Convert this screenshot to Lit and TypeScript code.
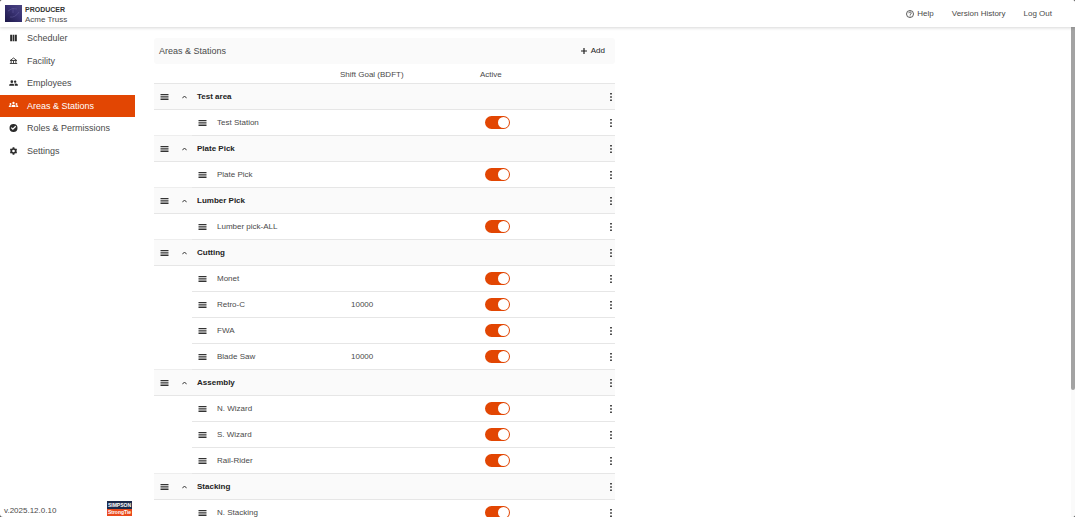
import { LitElement, html, css, svg, nothing } from "lit";
import { customElement, state } from "lit/decorators.js";
import { classMap } from "lit/directives/class-map.js";

interface Station {
  name: string;
  goal?: number;
  active: boolean;
}

interface Area {
  name: string;
  stations: Station[];
}

const on = (name: string, goal?: number): Station => ({ name, goal, active: true });

const AREAS: Area[] = [
  { name: "Test area", stations: [on("Test Station")] },
  { name: "Plate Pick", stations: [on("Plate Pick")] },
  { name: "Lumber Pick", stations: [on("Lumber pick-ALL")] },
  { name: "Cutting", stations: [on("Monet"), on("Retro-C", 10000), on("FWA"), on("Blade Saw", 10000)] },
  { name: "Assembly", stations: [on("N. Wizard"), on("S. Wizard"), on("Rail-Rider")] },
  { name: "Stacking", stations: [on("N. Stacking")] },
];

const NAV_ICONS: Record<string, unknown> = {
  Scheduler: svg`<path d="M2 2h5.500v20H2zM9.200 2h5.500v20H9.200zM16.400 2H22v20h-5.600z"/>`,
  Facility: svg`<path d="M12 3 2 10.500h20zM5 11v8M12 11v8M19 11v8M1 19.500h22" fill="none" stroke="currentColor" stroke-width="2.600"/>`,
  Employees: svg`<circle cx="7" cy="8" r="4"/><circle cx="17" cy="8" r="3.500"/><path d="M-1 20v-2c0-3 4-4 8-4s7 1 7 4v2zM16 20v-3c0-1.500-.6-2.600-1.500-3.500 4-.8 10.500.3 10.500 3.500v3z"/>`,
  "Areas & Stations": svg`<circle cx="12" cy="3" r="3.500"/><circle cx="3" cy="6" r="2.800"/><circle cx="21" cy="6" r="2.800"/><path d="M6 15v-3c0-2.500 3-3.500 6-3.500s6 1 6 3.500v3zM-2 15v-2c0-2.500 3-3.500 6.500-3-.5 1-.5 2-.5 5zM26 15v-2c0-2.500-3-3.500-6.500-3 .5 1 .5 2 .5 5z"/>`,
  "Roles & Permissions": svg`<path fill-rule="evenodd" d="M12 0a12 12 0 1 0 0 24 12 12 0 0 0 0-24zm-2 18-6-6 2.500-2.500L10 13l7.500-7.500L20 8z"/>`,
  Settings: svg`<path fill-rule="evenodd" d="m9.500 1h5l.7 3.300 2 1.200 3.200-1 2.500 4.300-2.500 2.200v2l2.500 2.200-2.500 4.300-3.200-1-2 1.200-.7 3.300h-5l-.7-3.300-2-1.200-3.200 1-2.500-4.300L3.600 13v-2L1.100 8.800l2.500-4.300 3.200 1 2-1.200zM12 8a4 4 0 1 0 0 8 4 4 0 0 0 0-8z"/>`,
};

const CURRENT = "Areas & Stations";

const handleIcon = html`<svg class="handle" viewBox="0 0 9 6" aria-hidden="true">
  <path d="M.5 0h8v1.300h-8zM.5 2.300h8v1.300h-8zM.5 4.600h8v1.300h-8z" />
</svg>`;

const moreIcon = html`<svg class="more-icon" viewBox="0 0 2 8" aria-hidden="true">
  <path d="M.2 0h1.600v1.600H.2zM.2 3.200h1.600v1.600H.2zM.2 6.400h1.600V8H.2z" />
</svg>`;

@customElement("app-root")
export class AppRoot extends LitElement {
  @state() private collapsed = new Set<string>();

  static styles = css`
    :host {
      display: block;
      height: 100vh;
      overflow: hidden;
      background: #555;
      font-family: "Liberation Sans", Arial, sans-serif;
      font-size: 8px;
      line-height: 12px;
      color: #4a4a4a;
    }
    * {
      box-sizing: border-box;
    }
    button {
      font: inherit;
      color: inherit;
      background: none;
      border: 0;
      padding: 0;
      cursor: pointer;
    }
    a {
      color: inherit;
      text-decoration: none;
    }
    svg {
      display: block;
      fill: currentColor;
    }
    .app {
      display: flex;
      flex-direction: column;
      height: 100%;
      background: #fff;
      border-radius: 3px;
      overflow: hidden;
    }
    .topbar {
      flex: none;
      display: flex;
      align-items: center;
      height: 27px;
      padding: 0 23px 0 5px;
      background: #fff;
      box-shadow: 0 1px 3px rgba(0, 0, 0, 0.16);
      z-index: 1;
    }
    .mark {
      width: 17px;
      height: 17px;
      margin-right: 3px;
    }
    .brand {
      line-height: 10px;
      padding-top: 3px;
    }
    .product {
      display: block;
      font-weight: bold;
      font-size: 7px;
      color: #333;
    }
    .links {
      display: flex;
      gap: 18px;
      margin-left: auto;
    }
    .links a {
      display: flex;
      align-items: center;
      gap: 3px;
    }
    .help-icon {
      width: 8px;
      height: 8px;
      fill: none;
      stroke: currentColor;
    }
    .body {
      flex: 1;
      min-height: 0;
      display: flex;
    }
    .sidebar {
      flex: none;
      width: 135px;
      display: flex;
      flex-direction: column;
      justify-content: space-between;
    }
    .nav {
      display: grid;
      grid-auto-rows: 1fr;
      height: 135px;
      font-size: 9px;
    }
    .nav a {
      display: flex;
      align-items: center;
      gap: 9px;
      padding-left: 9px;
    }
    .nav a.current {
      background: #e24603;
      color: #fff;
    }
    .nav svg {
      width: 9px;
      height: 8px;
      color: #2b2b2b;
      overflow: visible;
    }
    .nav .current svg {
      color: #fff;
    }
    .foot {
      display: flex;
      align-items: flex-end;
      justify-content: space-between;
      padding: 0 3px 1px 4px;
    }
    .version {
      line-height: 10px;
    }
    .maker {
      width: 25px;
      font-size: 5px;
      line-height: 7px;
      font-weight: bold;
      text-align: center;
      color: #fff;
      background: #ea4a1c;
    }
    .maker span {
      display: block;
    }
    .maker .upper {
      background: #1d2b4b;
      line-height: 8px;
    }
    .content {
      flex: 1;
      min-width: 0;
      overflow: hidden;
      padding: 11px 20px 0 19px;
    }
    .panel {
      max-width: 461px;
    }
    .panel-head {
      display: flex;
      align-items: center;
      justify-content: space-between;
      height: 26px;
      padding: 0 10px 0 5px;
      background: #fafafa;
      border-radius: 3px;
    }
    h1 {
      margin: 0;
      font-size: 9px;
      font-weight: normal;
    }
    .add {
      display: flex;
      align-items: center;
      gap: 4px;
      color: #222;
    }
    .add svg {
      width: 6px;
      height: 6px;
    }
    table {
      width: 100%;
      table-layout: fixed;
      border-spacing: 0;
    }
    .c-tools {
      width: 38px;
    }
    .c-goal {
      width: 140px;
    }
    .c-active {
      width: 118px;
    }
    .c-more {
      width: 17px;
    }
    th,
    td {
      padding: 0;
      height: 26px;
      font-weight: normal;
      text-align: left;
      vertical-align: middle;
      border-bottom: 1px solid #e6e6e6;
    }
    thead th {
      height: 20px;
      padding-top: 2px;
    }
    .area th,
    .area td {
      background: #fafafa;
      color: #222;
    }
    .area th {
      font-weight: bold;
      padding-left: 5px;
    }
    .station .indent {
      border-bottom-color: transparent;
    }
    tbody .station:last-child .indent {
      border-bottom-color: #eee;
    }
    .tools {
      display: flex;
      align-items: center;
      gap: 13px;
      padding-left: 6px;
    }
    .named {
      display: flex;
      align-items: center;
      gap: 10px;
      padding-left: 6px;
    }
    .handle {
      width: 9px;
      height: 6px;
      color: #333;
    }
    .chevron {
      width: 5px;
      height: 4px;
      fill: none;
      stroke: #333;
    }
    .closed .chevron {
      transform: rotate(180deg);
    }
    .goal {
      padding-left: 11px;
    }
    .switch {
      appearance: none;
      display: block;
      width: 25px;
      height: 13px;
      margin: 0 0 0 5px;
      padding: 1px;
      border-radius: 7px;
      background: #999;
      cursor: pointer;
    }
    .switch::before {
      content: "";
      display: block;
      width: 11px;
      height: 11px;
      border-radius: 50%;
      background: #fff;
    }
    .switch:checked {
      background: #e24603;
    }
    .switch:checked::before {
      margin-left: auto;
    }
    .more {
      display: block;
      padding: 4px 0 4px 12px;
    }
    .more-icon {
      width: 2px;
      height: 8px;
      color: #222;
    }
    .track {
      flex: none;
      width: 4px;
      background: #fafafa;
    }
    .thumb {
      height: 74%;
      background: #a3a3a3;
      border-radius: 0 0 2px 2px;
    }
  `;

  private toggleArea(name: string) {
    const next = new Set(this.collapsed);
    if (!next.delete(name)) next.add(name);
    this.collapsed = next;
  }

  private renderMore(name: string) {
    return html`<td>
      <button class="more" aria-label="Options for ${name}">${moreIcon}</button>
    </td>`;
  }

  private renderStation(s: Station) {
    return html`<tr class="station">
      <td class="indent"></td>
      <td><div class="named">${handleIcon}<span>${s.name}</span></div></td>
      <td class="goal">${s.goal ?? nothing}</td>
      <td><input class="switch" type="checkbox" aria-label="${s.name} active" .checked=${s.active} /></td>
      ${this.renderMore(s.name)}
    </tr>`;
  }

  private renderArea(a: Area) {
    const closed = this.collapsed.has(a.name);
    return html`<tbody class=${classMap({ closed })}>
      <tr class="area">
        <td>
          <div class="tools">
            ${handleIcon}
            <button aria-label="Toggle ${a.name}" aria-expanded=${String(!closed)} @click=${() => this.toggleArea(a.name)}>
              <svg class="chevron" viewBox="0 0 5 4"><path d="M.3 3.300 2.500 1l2.200 2.300" /></svg>
            </button>
          </div>
        </td>
        <th scope="rowgroup">${a.name}</th>
        <td></td>
        <td></td>
        ${this.renderMore(a.name)}
      </tr>
      ${closed ? nothing : a.stations.map((s) => this.renderStation(s))}
    </tbody>`;
  }

  render() {
    return html`<div class="app">
      <header class="topbar">
        <svg class="mark" viewBox="0 0 17 17" aria-hidden="true">
          <defs>
            <linearGradient id="night" x1="0" y1="1" x2="1" y2="0">
              <stop offset="0" stop-color="#1c1747" />
              <stop offset=".6" stop-color="#3b3476" />
              <stop offset="1" stop-color="#4b4580" />
            </linearGradient>
          </defs>
          <rect width="17" height="17" fill="url(#night)" />
          <path d="M3 6q4-4 9-2M5 12q5 1 9-5M8 3v5" fill="none" stroke="#6760a0" stroke-width=".7" opacity=".7" />
        </svg>
        <div class="brand"><span class="product">PRODUCER</span>Acme Truss</div>
        <nav class="links" aria-label="Account">
          <a href="#help">
            <svg class="help-icon" viewBox="0 0 8 8" aria-hidden="true">
              <circle cx="4" cy="4" r="3.500" stroke-width=".9" />
              <path d="M2.800 3.200c0-1.600 2.500-1.500 2.500-.1 0 .9-1.200.9-1.200 1.800M4.100 5.500v.9" stroke-width=".9" />
            </svg>
            Help
          </a>
          <a href="#versions">Version History</a>
          <a href="#logout">Log Out</a>
        </nav>
      </header>
      <div class="body">
        <aside class="sidebar">
          <nav class="nav" aria-label="Main">
            ${Object.entries(NAV_ICONS).map(
              ([label, icon]) => html`<a href="#" class=${classMap({ current: label === CURRENT })}>
                <svg viewBox="0 0 24 24" aria-hidden="true">${icon}</svg>${label}
              </a>`
            )}
          </nav>
          <div class="foot">
            <span class="version">v.2025.12.0.10</span>
            <div class="maker"><span class="upper">SIMPSON</span><span>StrongTie</span></div>
          </div>
        </aside>
        <main class="content">
          <section class="panel">
            <div class="panel-head">
              <h1>Areas &amp; Stations</h1>
              <button class="add">
                <svg viewBox="0 0 6 6" aria-hidden="true"><path d="M2.400 0h1.200v2.400H6v1.200H3.600V6H2.400V3.600H0V2.400h2.400z" /></svg>
                Add
              </button>
            </div>
            <table>
              <colgroup>
                <col class="c-tools" />
                <col />
                <col class="c-goal" />
                <col class="c-active" />
                <col class="c-more" />
              </colgroup>
              <thead>
                <tr>
                  <th></th>
                  <th></th>
                  <th scope="col">Shift Goal (BDFT)</th>
                  <th scope="col">Active</th>
                  <th></th>
                </tr>
              </thead>
              ${AREAS.map((a) => this.renderArea(a))}
            </table>
          </section>
        </main>
        <div class="track"><div class="thumb"></div></div>
      </div>
    </div>`;
  }
}
